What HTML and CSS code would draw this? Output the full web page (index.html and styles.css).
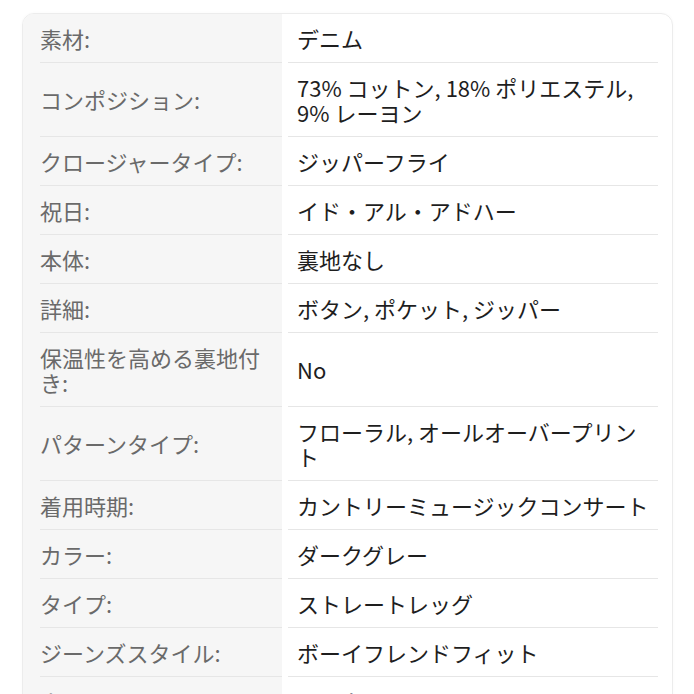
FILE: index.html
```html
<!DOCTYPE html>
<html lang="ja">
<head>
<meta charset="utf-8">
<link rel="stylesheet" href="styles.css">
</head>
<body>
<div class="card">
  <div class="row"><div class="label"><div class="cell">素材:</div></div><div class="value"><div class="cell">デニム</div></div></div>
  <div class="row"><div class="label"><div class="cell">コンポジション:</div></div><div class="value"><div class="cell">73% コットン, 18% ポリエステル,<br>9% レーヨン</div></div></div>
  <div class="row"><div class="label"><div class="cell">クロージャータイプ:</div></div><div class="value"><div class="cell">ジッパーフライ</div></div></div>
  <div class="row"><div class="label"><div class="cell">祝日:</div></div><div class="value"><div class="cell">イド・アル・アドハー</div></div></div>
  <div class="row"><div class="label"><div class="cell">本体:</div></div><div class="value"><div class="cell">裏地なし</div></div></div>
  <div class="row"><div class="label"><div class="cell">詳細:</div></div><div class="value"><div class="cell">ボタン, ポケット, ジッパー</div></div></div>
  <div class="row"><div class="label"><div class="cell">保温性を高める裏地付<br>き:</div></div><div class="value"><div class="cell">No</div></div></div>
  <div class="row"><div class="label"><div class="cell">パターンタイプ:</div></div><div class="value"><div class="cell">フローラル, オールオーバープリン<br>ト</div></div></div>
  <div class="row"><div class="label"><div class="cell">着用時期:</div></div><div class="value"><div class="cell">カントリーミュージックコンサート</div></div></div>
  <div class="row"><div class="label"><div class="cell">カラー:</div></div><div class="value"><div class="cell">ダークグレー</div></div></div>
  <div class="row"><div class="label"><div class="cell">タイプ:</div></div><div class="value"><div class="cell">ストレートレッグ</div></div></div>
  <div class="row"><div class="label"><div class="cell">ジーンズスタイル:</div></div><div class="value"><div class="cell">ボーイフレンドフィット</div></div></div>
  <div class="row"><div class="label"><div class="cell">ウエストライン:</div></div><div class="value"><div class="cell">ハイウエスト</div></div></div>
</div>
</body>
</html>
```

FILE: styles.css
```css
html, body {
  margin: 0;
  padding: 0;
  background: #ffffff;
}

body {
  font-family: "Noto Sans CJK JP", "Noto Sans", sans-serif;
  font-size: 22px;
  line-height: 25px;
}

.card {
  margin: 13px 0 0 22px;
  width: 649px;
  border: 1px solid #ececec;
  border-radius: 12px;
  overflow: hidden;
  box-shadow: 0 0 3px rgba(0, 0, 0, 0.03);
}

.row {
  display: flex;
}

.label {
  width: 242px;
  flex: none;
  display: flex;
  padding-left: 17px;
  background: #f6f6f6;
  color: #6a6a6a;
}

.value {
  flex: 1;
  display: flex;
  padding: 0 14px 0 6px;
  color: #1e1e1e;
}

.cell {
  flex: 1;
  display: flex;
  align-items: center;
  padding: 11.5px 0 11.5px 0;
  border-bottom: 1px solid #e6e6e6;
}

.value .cell {
  padding-left: 9px;
}
```
